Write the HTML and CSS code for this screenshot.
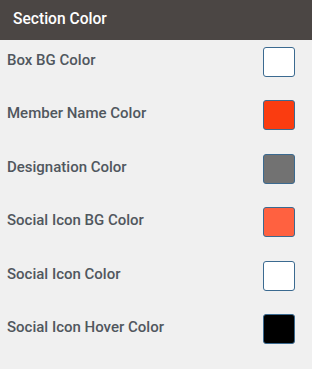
FILE: index.html
```html
<!DOCTYPE html>
<html lang="en">
<head>
    <meta charset="UTF-8">
    <meta name="viewport" content="width=device-width, initial-scale=1.0">
    <title>Section Color</title>
    <link rel="stylesheet" href="styles.css">
</head>
<body>
    <div class="panel">
        <div class="panel-head">Section Color</div>

        <div class="row">
            <span class="label">Box BG Color</span>
            <span class="swatch white"></span>
        </div>
        <div class="row">
            <span class="label">Member Name Color</span>
            <span class="swatch red"></span>
        </div>
        <div class="row">
            <span class="label">Designation Color</span>
            <span class="swatch grey"></span>
        </div>
        <div class="row">
            <span class="label">Social Icon BG Color</span>
            <span class="swatch orange"></span>
        </div>
        <div class="row">
            <span class="label">Social Icon Color</span>
            <span class="swatch white"></span>
        </div>
        <div class="row">
            <span class="label">Social Icon Hover Color</span>
            <span class="swatch black"></span>
        </div>
    </div>
</body>
</html>
```

FILE: styles.css
```css
/* General Styles */
body {
    margin: 0;
    padding: 0;
    font-family: Roboto, "Liberation Sans", sans-serif;
    background: #f0f0f0;
}

.panel {
    width: 312px;
}

.panel-head {
    height: 40px;
    background-color: #4b4644;
    color: #ffffff;
    font-size: 15.6px;
    font-weight: 500;
    line-height: 38px;
    padding-left: 13px;
}

/* Colour rows */
.row {
    display: flex;
    align-items: center;
    justify-content: space-between;
    box-sizing: border-box;
    height: 53.4px;
    padding: 7px 17px 16.4px 7px;
}

.label {
    font-size: 15px;
    font-weight: 500;
    color: #50575e;
    margin-bottom: 4px;
}

.swatch {
    width: 32px;
    height: 30px;
    box-sizing: border-box;
    border: 1px solid #3b6a90;
    border-radius: 3px;
}

.white { background-color: #ffffff; }
.red { background-color: #fa3c10; }
.grey { background-color: #727272; }
.orange { background-color: #ff6140; }
.black { background-color: #000000; }
```
